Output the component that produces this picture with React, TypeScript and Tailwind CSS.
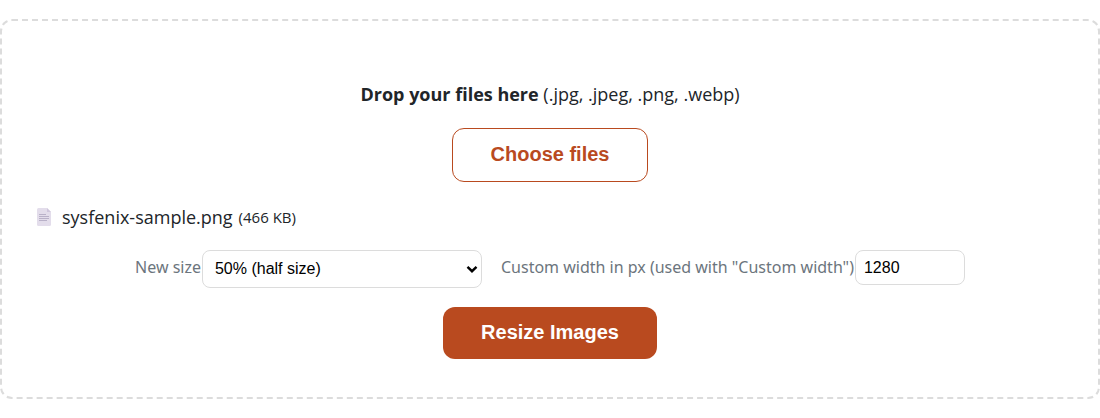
import React, { useState } from "react";

function FileIcon() {
  return (
    <svg className="h-5 w-4 shrink-0" viewBox="0 0 16 20" aria-hidden="true">
      <path d="M1 2.500Q1 1 2.500 1H11l4 4v12.500Q15 19 13.500 19h-11Q1 19 1 17.500z" fill="#e3ddeb" />
      <path d="M11 1l4 4h-4z" fill="#cfc6dc" />
      <path d="M3 7.500h7M3 9.500h10M3 11.500h10M3 13.500h8" stroke="#b9b1c8" strokeWidth="1" />
    </svg>
  );
}

function Chevron() {
  return (
    <svg
      className="pointer-events-none col-start-1 row-start-1 mr-1 h-2 w-3 self-center justify-self-end"
      viewBox="0 0 12 8"
      fill="none"
      aria-hidden="true"
    >
      <path d="M1.500 1.800L6 6.200l4.500-4.400" stroke="#000" strokeWidth="2.400" />
    </svg>
  );
}

export default function App() {
  const [size, setSize] = useState("50");
  const [width, setWidth] = useState("1280");

  return (
    <main className="bg-white pt-[19px] font-['Open_Sans',sans-serif] text-[#212529]">
      <form
        className="flex flex-col items-center rounded-xl border-2 border-dashed border-[#dcdcdc] px-8 pt-[60px] pb-[38px]"
        onSubmit={(e) => e.preventDefault()}
      >
        <p className="text-lg leading-[26px]">
          <strong className="font-bold">Drop your files here</strong> (.jpg, .jpeg, .png, .webp)
        </p>
        <button
          type="button"
          className="mt-[21px] h-[54px] rounded-xl border border-[#b94a1f] bg-white px-[38px] pb-[2px] font-['Liberation_Sans',sans-serif] text-xl font-bold text-[#b94a1f]"
        >
          Choose files
        </button>
        <ul className="mt-[22px] w-full">
          <li className="flex items-center text-lg leading-[26px]">
            <span className="mr-[10px] flex pl-[2px]">
              <FileIcon />
            </span>
            <span>sysfenix-sample.png</span>
            <span className="ml-[6px] text-[15px] leading-[26px]">(466 KB)</span>
          </li>
        </ul>
        <div className="mt-5 flex flex-wrap items-start justify-center gap-x-[19px] font-['Noto_Sans',sans-serif] text-base text-[#6c757d]">
          <div className="flex items-start">
            <label htmlFor="size" className="pr-px leading-[35px]">
              New size
            </label>
            <div className="grid">
              <select
                id="size"
                value={size}
                onChange={(e) => setSize(e.target.value)}
                className="col-start-1 row-start-1 h-[38px] w-[280px] appearance-none rounded-lg border border-[#dcdcdc] bg-white px-3 font-['Liberation_Sans',sans-serif] text-base text-black"
              >
                <option value="50">50% (half size)</option>
                <option value="custom">Custom width</option>
              </select>
              <Chevron />
            </div>
          </div>
          <div className="flex items-start">
            <label htmlFor="width" className="pr-px leading-[35px]">
              Custom width in px (used with "Custom width")
            </label>
            <input
              id="width"
              inputMode="numeric"
              value={width}
              onChange={(e) => setWidth(e.target.value)}
              className="h-[35px] w-[110px] rounded-lg border border-[#dcdcdc] bg-white px-2 font-['Liberation_Sans',sans-serif] text-base text-black"
            />
          </div>
        </div>
        <button
          type="submit"
          className="mt-[19px] h-[52px] rounded-xl bg-[#b94a1f] px-[38px] pb-[2px] font-['Liberation_Sans',sans-serif] text-xl font-bold text-white"
        >
          Resize Images
        </button>
      </form>
    </main>
  );
}
